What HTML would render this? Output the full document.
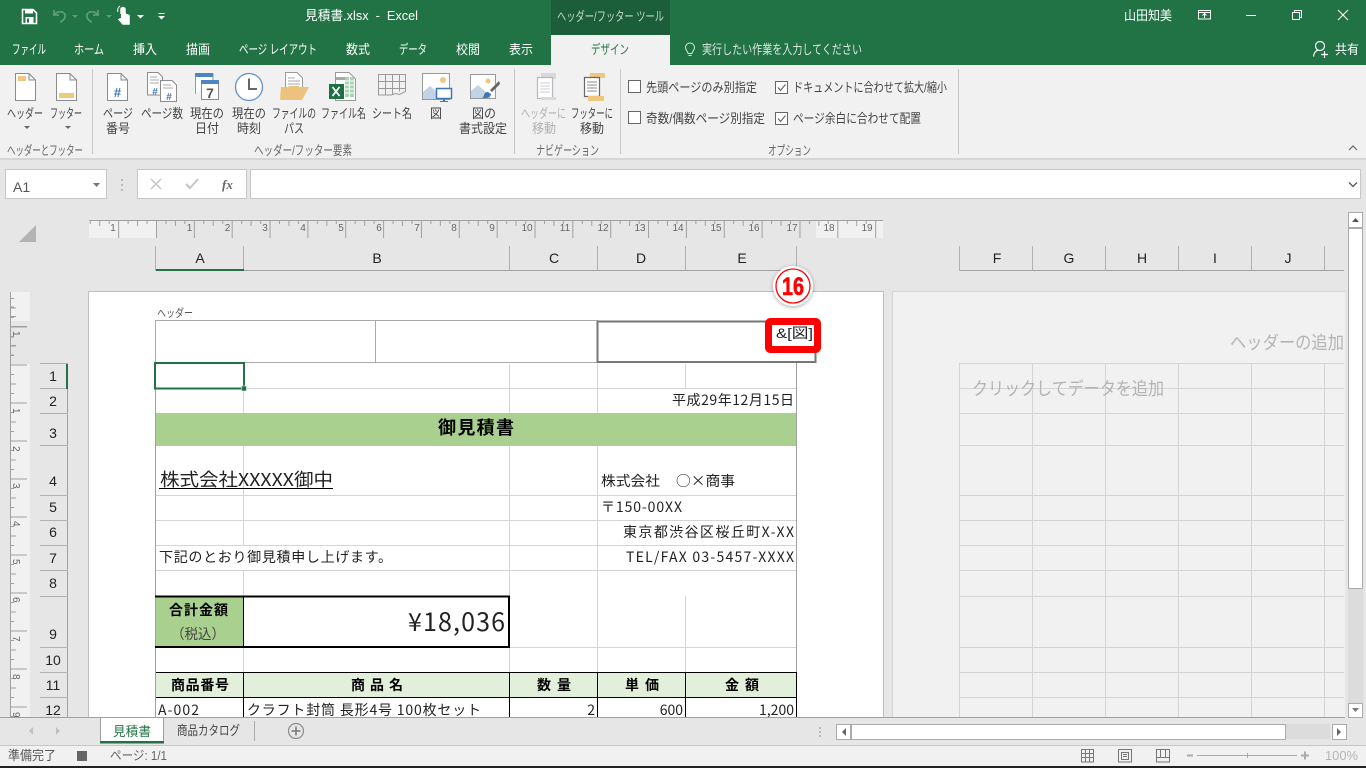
<!DOCTYPE html>
<html lang="ja"><head><meta charset="utf-8"><title>見積書.xlsx - Excel</title>
<style>
html,body{margin:0;padding:0;width:1366px;height:768px;overflow:hidden;background:#e6e6e6}
svg{display:block;position:absolute;left:0;top:0}
text{font-family:"Liberation Sans","Noto Sans CJK JP",sans-serif;font-size:13px;fill:#444;white-space:pre}
.t{fill:#fff}
.c{font-size:14px;fill:#222;font-family:"Noto Sans CJK JP","Liberation Sans",sans-serif}
.b{font-weight:700;fill:#000}
.r{font-size:10px;fill:#666}
.h{font-size:14px;fill:#222;text-anchor:middle}
.g{font-size:18px;fill:#b4b4b4}
.p{fill:#fff;stroke:#8c8c8c;stroke-width:1}
.l{stroke:#d4d4d4;stroke-width:1;fill:none}
.k{stroke:#a0a0a0;stroke-width:1;fill:none}
</style></head><body>
<svg width="1366" height="768" viewBox="0 0 1366 768" xmlns="http://www.w3.org/2000/svg">
<defs>
<pattern id="hr" patternUnits="userSpaceOnUse" x="156" y="220" width="37.85" height="18"><path d="M.5 0V18M9.96 0V4M19.4 0V6M28.9 0V4" stroke="#a0a0a0" fill="none"/></pattern>
<pattern id="vr" patternUnits="userSpaceOnUse" x="10" y="364.5" width="20" height="38"><path d="M0 .5H17M0 10H4M0 19.5H6M0 29H4" stroke="#a0a0a0" fill="none"/></pattern>
<filter id="sh" x="-30%" y="-30%" width="160%" height="160%"><feDropShadow dx="0" dy="1" stdDeviation="2" flood-color="#000" flood-opacity=".35"/></filter>
</defs>

<!-- title bar & tabs -->
<rect width="1366" height="65" fill="#217346"/>
<rect x="551" y="0" width="119" height="35" fill="#1b5e39"/>
<rect x="551" y="35" width="119" height="30" fill="#f1f1f1"/>
<!-- QAT -->
<path d="M22.5 9.5H33L36.5 13V23.5H22.5Z" fill="none" stroke="#fff" stroke-width="1.6"/><rect x="25" y="9" width="8" height="4.5" fill="#fff"/><rect x="25.5" y="17" width="8" height="6" fill="#fff"/><rect x="27" y="18.5" width="2" height="4" fill="#217346"/>
<path d="M54 10V15H59M54 15C58 10 66 11 65 17C64.500 20 62 21 60 22" fill="none" stroke="#5b9b77" stroke-width="1.800"/>
<path d="M72 15h6l-3 3z" fill="#5b9b77"/>
<path d="M98 10V15H93M98 15C94 10 86 11 87 17C87.500 20 90 21 92 22" fill="none" stroke="#5b9b77" stroke-width="1.800"/>
<path d="M106 15h6l-3 3z" fill="#5b9b77"/>
<path d="M121 14V9.500a2 2 0 0 1 4 0V14l4 1.500V24h-6l-4-4.500 2-1" fill="#fff" stroke="#fff" stroke-width="1.500"/><path d="M118 12a5 5 0 0 1 2-6" stroke="#fff" fill="none"/>
<path d="M137 15h7l-3.500 3.500z" fill="#fff"/>
<path d="M158.500 13.500h6" stroke="#fff"/><path d="M158 16h7l-3.500 3.500z" fill="#fff"/>
<text class="t" x="305" y="20" textLength="113" lengthAdjust="spacingAndGlyphs">見積書.xlsx  -  Excel</text>
<text x="557" y="21" textLength="107" lengthAdjust="spacingAndGlyphs" style="fill:#c4d8cc">ヘッダー/フッター ツール</text>
<text class="t" x="1124" y="20" textLength="48" lengthAdjust="spacingAndGlyphs">山田知美</text>
<!-- window controls -->
<path d="M1198.500 10.500h12v8.500h-12zM1198.500 12.500h12M1204.500 18v-4M1202.500 15.500l2-2 2 2" fill="none" stroke="#fff"/>
<path d="M1246 15.500h10" stroke="#fff"/>
<path d="M1292.500 12.500h7v7h-7zM1294.500 12.500v-2h7v7h-2" fill="none" stroke="#fff"/>
<path d="M1338 10l10 10M1348 10l-10 10" stroke="#fff" stroke-width="1.100"/>
<!-- tabs -->
<text class="t" x="12" y="54" textLength="34" lengthAdjust="spacingAndGlyphs">ファイル</text>
<text class="t" x="74" y="54" textLength="30" lengthAdjust="spacingAndGlyphs">ホーム</text>
<text class="t" x="133" y="54" textLength="24" lengthAdjust="spacingAndGlyphs">挿入</text>
<text class="t" x="186" y="54" textLength="24" lengthAdjust="spacingAndGlyphs">描画</text>
<text class="t" x="239" y="54" textLength="78" lengthAdjust="spacingAndGlyphs">ページ レイアウト</text>
<text class="t" x="346" y="54" textLength="24" lengthAdjust="spacingAndGlyphs">数式</text>
<text class="t" x="399" y="54" textLength="28" lengthAdjust="spacingAndGlyphs">データ</text>
<text class="t" x="456" y="54" textLength="24" lengthAdjust="spacingAndGlyphs">校閲</text>
<text class="t" x="509" y="54" textLength="24" lengthAdjust="spacingAndGlyphs">表示</text>
<text x="591" y="54" textLength="38" lengthAdjust="spacingAndGlyphs" style="fill:#217346">デザイン</text>
<path d="M688 53.500c0-2-2.500-3-2.500-6a4.500 4.500 0 0 1 9 0c0 3-2.500 4-2.500 6zM688.500 55.500h3" fill="none" stroke="#dbe8e0"/>
<text x="702" y="54" textLength="160" lengthAdjust="spacingAndGlyphs" style="fill:#dbe8e0">実行したい作業を入力してください</text>
<circle cx="1320" cy="46" r="4.500" fill="none" stroke="#fff" stroke-width="1.200"/><path d="M1313.500 56.500c.5-4 2.500-6 5-6.500M1321 54.500h7M1324.500 51v7" fill="none" stroke="#fff" stroke-width="1.200"/>
<text class="t" x="1335" y="54" textLength="24" lengthAdjust="spacingAndGlyphs">共有</text>

<!-- ribbon -->
<rect y="65" width="1366" height="93" fill="#f1f1f1"/>
<rect y="158" width="1366" height="2" fill="#d6d6d6"/>
<path d="M92.500 69v85M514.500 69v85M620.500 69v85M958.500 69v85" stroke="#c6c6c6"/>
<!-- header / footer icons -->
<path class="p" d="M15.500 73.500H29L35.500 80V100.500H15.500ZM29 73.500V80H35.500"/><rect x="18" y="76" width="8" height="5" fill="#efc77e"/>
<path class="p" d="M56.500 73.500H70L76.500 80V100.500H56.500ZM70 73.500V80H76.500"/><rect x="59" y="93" width="15" height="5" fill="#efc77e"/>
<path class="p" d="M107.500 73.500H121L127.500 80V100.500H107.500ZM121 73.500V80H127.500"/>
<text x="117.500" y="97" style="font-size:13px;font-weight:700;fill:#3f78b5;text-anchor:middle">#</text>
<path class="p" d="M147.500 72.500H158L162.500 77V95H147.500Z"/><path d="M150 77h7M150 80h9M150 83h9" stroke="#aaa"/>
<text x="155" y="95" style="font-size:10px;font-weight:700;fill:#3f78b5;text-anchor:middle">#</text>
<path class="p" d="M160.500 80.500H172L176.500 85V101.500H160.500Z"/><path d="M163 85h8M163 88h10" stroke="#aaa"/>
<text x="169" y="100" style="font-size:10px;font-weight:700;fill:#3f78b5;text-anchor:middle">#</text>
<path d="M195.500 94V73.500H213V80" fill="#fff" stroke="#999"/><rect x="195" y="73" width="18" height="4" fill="#4e86c4"/>
<rect x="201.500" y="80.500" width="17" height="19" fill="#fff" stroke="#8c8c8c"/><rect x="201" y="80" width="18" height="4" fill="#4e86c4"/>
<text x="210" y="98" style="font-size:14px;font-weight:700;fill:#555;text-anchor:middle">7</text>
<circle cx="249" cy="87" r="13.500" fill="#fff" stroke="#5f92cc" stroke-width="1.300"/><path d="M249 78.500V89H257" fill="none" stroke="#666" stroke-width="2"/>
<path d="M285.500 92V72.500H297L302.500 78V92" fill="#fff" stroke="#999"/><path d="M288 78h7M288 81h12M288 84h12" stroke="#aaa"/>
<path d="M281 87h7l1-1h10l0 1h10l-7 13H280Z" fill="#edc27c"/>
<path d="M335.500 72.500H349L355.500 79V100.500H335.500Z" fill="#fff" stroke="#999"/>
<path d="M336 77h9v3h-9z" fill="#aaa"/><rect x="345" y="77" width="9" height="20" fill="#a8d5b4"/><path d="M345 81h9M345 85h9M345 89h9M345 93h9M349.500 77v20" stroke="#fff"/>
<rect x="329" y="84" width="15" height="15" fill="#1e7145"/>
<path d="M332.500 87l7 9M339.500 87l-7 9" stroke="#fff" stroke-width="1.800"/>
<path d="M378.500 74.500h27v17l-6 3-4-1-4 1.500h-13zM378.500 81.500h27M378.500 88.500h27M385.500 74.500v20M392.500 74.500v20M399.500 74.500v17" fill="none" stroke="#999"/>
<rect x="422.500" y="73.500" width="27" height="26" fill="#fff" stroke="#999"/><circle cx="443" cy="80" r="3" fill="#efc77e"/><path d="M423 99V92l7-6 8 7 3-2 3 8z" fill="#c2d3e8"/>
<rect x="436.500" y="88.500" width="15" height="10" fill="#fff" stroke="#3f78b5" stroke-width="1.500"/><rect x="443" y="99" width="2" height="2" fill="#3f78b5"/><path d="M440 101.500h8" stroke="#3f78b5"/>
<rect x="470.500" y="74.500" width="25" height="24" fill="#fff" stroke="#999"/><circle cx="488" cy="81" r="2.500" fill="#efc77e"/><path d="M471 98V91l7-6 8 7 5 6z" fill="#c2d3e8"/>
<path d="M499 81l-9 9 2 2 8-8z" fill="#666"/><path d="M488 92c-3 0-4 2-4 4l-2 2h4c3 0 5-2 5-4z" fill="#3f78b5"/>
<!-- nav icons -->
<rect x="541" y="73" width="15" height="6" fill="#dad8dc"/><path d="M537.500 77.500h15v21h-15z" fill="#fff" stroke="#b8b6ba" stroke-width="1.200"/><path d="M540 83h10M540 86h10M540 89h10M540 92h10" stroke="#cfcdd1"/><rect x="541" y="97" width="15" height="3" fill="#dad8dc"/>
<rect x="590" y="73" width="15" height="5" fill="#efc77e"/><path d="M584.500 77.500h15v19h-15z" fill="#fff" stroke="#666" stroke-width="1.200"/><path d="M587 82h10M587 85h10M587 88h10M587 91h10" stroke="#888"/><rect x="588" y="96" width="16" height="5" fill="#efc77e"/>
<!-- ribbon labels -->
<text x="7" y="118" textLength="36" lengthAdjust="spacingAndGlyphs">ヘッダー</text>
<text x="50" y="118" textLength="32" lengthAdjust="spacingAndGlyphs">フッター</text>
<path d="M24 126h6l-3 3zM65 126h6l-3 3z" fill="#666"/>
<text x="103" y="118" textLength="30" lengthAdjust="spacingAndGlyphs">ページ</text><text x="106" y="133" textLength="24" lengthAdjust="spacingAndGlyphs">番号</text>
<text x="141" y="118" textLength="42" lengthAdjust="spacingAndGlyphs">ページ数</text>
<text x="190" y="118" textLength="34" lengthAdjust="spacingAndGlyphs">現在の</text><text x="195" y="133" textLength="24" lengthAdjust="spacingAndGlyphs">日付</text>
<text x="232" y="118" textLength="34" lengthAdjust="spacingAndGlyphs">現在の</text><text x="237" y="133" textLength="24" lengthAdjust="spacingAndGlyphs">時刻</text>
<text x="272" y="118" textLength="44" lengthAdjust="spacingAndGlyphs">ファイルの</text><text x="284" y="133" textLength="20" lengthAdjust="spacingAndGlyphs">パス</text>
<text x="321" y="118" textLength="45" lengthAdjust="spacingAndGlyphs">ファイル名</text>
<text x="372" y="118" textLength="40" lengthAdjust="spacingAndGlyphs">シート名</text>
<text x="430" y="118" textLength="12" lengthAdjust="spacingAndGlyphs">図</text>
<text x="472" y="118" textLength="24" lengthAdjust="spacingAndGlyphs">図の</text><text x="459" y="133" textLength="48" lengthAdjust="spacingAndGlyphs">書式設定</text>
<text x="521" y="118" textLength="45" lengthAdjust="spacingAndGlyphs" style="fill:#b1b1b1">ヘッダーに</text><text x="532" y="133" textLength="24" lengthAdjust="spacingAndGlyphs" style="fill:#b1b1b1">移動</text>
<text x="571" y="118" textLength="42" lengthAdjust="spacingAndGlyphs">フッターに</text><text x="580" y="133" textLength="24" lengthAdjust="spacingAndGlyphs">移動</text>
<text x="7" y="155" textLength="76" lengthAdjust="spacingAndGlyphs" style="fill:#666">ヘッダーとフッター</text>
<text x="254" y="155" textLength="98" lengthAdjust="spacingAndGlyphs" style="fill:#666">ヘッダー/フッター要素</text>
<text x="536" y="155" textLength="63" lengthAdjust="spacingAndGlyphs" style="fill:#666">ナビゲーション</text>
<text x="768" y="155" textLength="43" lengthAdjust="spacingAndGlyphs" style="fill:#666">オプション</text>
<!-- checkboxes -->
<rect x="628.500" y="80.500" width="12" height="12" fill="#fff" stroke="#666"/>
<rect x="628.500" y="111.500" width="12" height="12" fill="#fff" stroke="#666"/>
<rect x="775.500" y="81.500" width="12" height="12" fill="#fff" stroke="#666"/><path d="M778 87.500l2.500 3 5-6" fill="none" stroke="#666" stroke-width="1.200"/>
<rect x="775.500" y="112.500" width="12" height="12" fill="#fff" stroke="#666"/><path d="M778 118.500l2.500 3 5-6" fill="none" stroke="#666" stroke-width="1.200"/>
<text x="646" y="92" textLength="111" lengthAdjust="spacingAndGlyphs">先頭ページのみ別指定</text>
<text x="646" y="123" textLength="119" lengthAdjust="spacingAndGlyphs">奇数/偶数ページ別指定</text>
<text x="793" y="92" textLength="154" lengthAdjust="spacingAndGlyphs">ドキュメントに合わせて拡大/縮小</text>
<text x="793" y="123" textLength="128" lengthAdjust="spacingAndGlyphs">ページ余白に合わせて配置</text>
<path d="M1349 150l4-4 4 4" fill="none" stroke="#666" stroke-width="1.200"/>

<!-- formula bar -->
<rect x="5.500" y="169.500" width="101" height="29" fill="#fff" stroke="#c6c6c6"/>
<text x="13" y="192" style="font-size:14px;fill:#555">A1</text>
<path d="M93 183h7l-3.500 4z" fill="#777"/>
<path d="M122 179v2M122 184v2M122 189v2" stroke="#aaa" stroke-width="1.500"/>
<rect x="137.500" y="169.500" width="109" height="29" fill="#fff" stroke="#c6c6c6"/>
<path d="M151 179l10 10M161 179l-10 10" stroke="#c6c6c6" stroke-width="1.500"/>
<path d="M186 184l4 4 8-9" fill="none" stroke="#c6c6c6" stroke-width="2"/>
<text x="222" y="189" style="font-family:'Liberation Serif',serif;font-style:italic;font-weight:700;font-size:13px;fill:#666">fx</text>
<rect x="250.500" y="169.500" width="1110" height="29" fill="#fff" stroke="#c6c6c6"/>
<path d="M1349 182.500l4 4 4-4" fill="none" stroke="#555" stroke-width="1.300"/>

<!-- corner -->
<path d="M19 242L36 225V242Z" fill="#b4b4b4"/>

<!-- horizontal ruler -->
<rect x="89" y="220" width="67" height="18" fill="#f1f1f1"/>
<rect x="816" y="220" width="67" height="18" fill="#f1f1f1"/>
<rect x="89" y="220" width="794" height="18" fill="url(#hr)"/>
<path d="M89 220.500H883" stroke="#a0a0a0"/>
<g text-anchor="middle">
<text class="r" x="113" y="231">1</text><text class="r" x="189.500" y="231">1</text><text class="r" x="227.500" y="231">2</text><text class="r" x="265" y="231">3</text><text class="r" x="303" y="231">4</text><text class="r" x="341" y="231">5</text><text class="r" x="379" y="231">6</text><text class="r" x="417" y="231">7</text><text class="r" x="454" y="231">8</text><text class="r" x="492" y="231">9</text><text class="r" x="527" y="231">10</text><text class="r" x="565" y="231">11</text><text class="r" x="603" y="231">12</text><text class="r" x="640" y="231">13</text><text class="r" x="678" y="231">14</text><text class="r" x="716" y="231">15</text><text class="r" x="754" y="231">16</text><text class="r" x="792" y="231">17</text><text class="r" x="829" y="231">18</text><text class="r" x="867" y="231">19</text>
</g>

<!-- column headers -->
<path d="M156 270.500H797M960 270.500H1344" stroke="#a0a0a0"/>
<path d="M155.500 246v25M243.500 246v25M509.500 246v25M597.500 246v25M685.500 246v25M796.500 246v25M959.500 246v25M1032.500 246v25M1105.500 246v25M1178.500 246v25M1251.500 246v25M1324.500 246v25" stroke="#b0b0b0"/>
<rect x="156" y="269" width="88" height="2" fill="#217346"/>
<g>
<text class="h" x="200" y="263">A</text><text class="h" x="377" y="263">B</text><text class="h" x="554" y="263">C</text><text class="h" x="641" y="263">D</text><text class="h" x="742" y="263">E</text>
<text class="h" x="997" y="263">F</text><text class="h" x="1069" y="263">G</text><text class="h" x="1142" y="263">H</text><text class="h" x="1215" y="263">I</text><text class="h" x="1288" y="263">J</text>
</g>

<!-- vertical ruler -->
<rect x="11" y="292" width="19" height="29" fill="#f1f1f1"/>
<rect x="11" y="364" width="19" height="353" fill="#f1f1f1"/>
<rect x="10" y="292" width="20" height="425" fill="url(#vr)"/>
<path d="M10.500 292V717" stroke="#a0a0a0"/>
<path d="M10 326.500H27M10 337H14M10 345.500H16M10 355H14M10 307H14M10 316.500H16" stroke="#a0a0a0"/>
<g>
<text class="r" transform="translate(13,331) rotate(90)">1</text>
<text class="r" transform="translate(13,408) rotate(90)">1</text>
<text class="r" transform="translate(13,446) rotate(90)">2</text>
<text class="r" transform="translate(13,483) rotate(90)">3</text>
<text class="r" transform="translate(13,521) rotate(90)">4</text>
<text class="r" transform="translate(13,559) rotate(90)">5</text>
<text class="r" transform="translate(13,597) rotate(90)">6</text>
<text class="r" transform="translate(13,636) rotate(90)">7</text>
<text class="r" transform="translate(13,674) rotate(90)">8</text>
<text class="r" transform="translate(13,712) rotate(90)">9</text>
</g>

<!-- row headers -->
<path d="M67.500 364V717" stroke="#a0a0a0"/>
<path d="M40 363.500H68M40 388.500H68M40 413.500H68M40 445.500H68M40 495.500H68M40 520.500H68M40 545.500H68M40 570.500H68M40 596.500H68M40 647.500H68M40 672.500H68M40 697.500H68" stroke="#b0b0b0"/>
<rect x="66" y="364" width="2" height="25" fill="#217346"/>
<g>
<text class="h" x="53" y="381">1</text><text class="h" x="53" y="406">2</text><text class="h" x="53" y="438">3</text><text class="h" x="53" y="486">4</text><text class="h" x="53" y="512">5</text><text class="h" x="53" y="537">6</text><text class="h" x="53" y="563">7</text><text class="h" x="53" y="588">8</text><text class="h" x="53" y="639">9</text><text class="h" x="53" y="665">10</text><text class="h" x="53" y="690">11</text><text class="h" x="53" y="715">12</text>
</g>

<!-- page 1 -->
<rect x="88.500" y="291.500" width="795" height="430" fill="#fff" stroke="#bfbfbf"/>
<!-- page 2 -->
<rect x="892.500" y="291.500" width="460" height="430" fill="#f1f1f1" stroke="#d4d4d4"/>
<rect x="1345" y="212" width="21" height="506" fill="#e6e6e6"/>
<path d="M959.500 363V717M1032.500 363V717M1105.500 363V717M1178.500 363V717M1251.500 363V717M1324.500 363V717" class="l"/>
<path d="M960 363.500H1344M960 388.500H1344M960 413.500H1344M960 445.500H1344M960 495.500H1344M960 520.500H1344M960 545.500H1344M960 570.500H1344M960 596.500H1344M960 647.500H1344M960 672.500H1344M960 697.500H1344" class="l"/>
<text class="g" x="1230" y="349" textLength="114" lengthAdjust="spacingAndGlyphs">ヘッダーの追加</text>
<text class="g" x="972" y="395" textLength="192" lengthAdjust="spacingAndGlyphs">クリックしてデータを追加</text>

<!-- sheet gridlines -->
<path class="l" d="M156 388.500H797M156 413.500H797M156 445.500H797M156 495.500H797M156 520.500H797M156 545.500H797M156 570.500H797M510 647.500H797M156 647.500H510M156 672.500H797"/>
<path class="l" d="M243.500 364V413M243.500 446V545M243.500 570V596M243.500 647V672M509.500 364V413M509.500 446V596M509.500 647V672M597.500 364V413M597.500 446V672M685.500 364V389M685.500 596V672"/>
<rect x="156" y="413" width="641" height="33" fill="#a9d08e"/>
<path class="k" d="M155.500 363V717M796.500 363V717"/>

<!-- total box -->
<rect x="156" y="597" width="88" height="50" fill="#a9d08e"/>
<path d="M155 596.500H510M155 647H510M509 596V648" stroke="#000" stroke-width="2" fill="none"/>
<path d="M243.500 597V647" stroke="#000"/>
<!-- table -->
<rect x="156" y="672" width="641" height="25" fill="#e2efda"/>
<path d="M156 672.500H797M156 697.500H797M243.500 672V717M509.500 672V717M597.500 672V717M685.500 672V717M796.500 672V717" stroke="#000" fill="none"/>

<!-- header section boxes -->
<text x="157" y="317" textLength="36" lengthAdjust="spacingAndGlyphs" style="font-size:11.500px;fill:#555">ヘッダー</text>
<path d="M155.500 363V320.500H598M375.500 321V362M156 362.500H598" fill="none" stroke="#aaa"/>
<rect x="597.500" y="321.500" width="218" height="40.500" fill="#fff" stroke="#777" stroke-width="2"/>

<!-- selection -->
<rect x="155" y="363" width="89" height="25.500" fill="none" stroke="#217346" stroke-width="2"/>
<rect x="241.500" y="386" width="5" height="5" fill="#217346" stroke="#fff" stroke-width=".5"/>

<!-- sheet text -->
<text class="c" x="672" y="405" textLength="122">平成29年12月15日</text>
<text class="c b" x="438" y="434" style="font-size:18px" textLength="76">御見積書</text>
<text class="c" x="160" y="486" style="font-size:18px" textLength="173" lengthAdjust="spacingAndGlyphs">株式会社XXXXX御中</text>
<path d="M159 488.500H333" stroke="#000"/>
<text class="c" x="601" y="486" style="font-size:14px" textLength="59" lengthAdjust="spacingAndGlyphs">株式会社</text>
<text class="c" x="676" y="486" style="font-size:14px" textLength="59" lengthAdjust="spacingAndGlyphs">○×商事</text>
<text class="c" x="601" y="512" textLength="81">〒150-00XX</text>
<text class="c" x="623" y="537" textLength="171">東京都渋谷区桜丘町X-XX</text>
<text class="c" x="626" y="562" textLength="168">TEL/FAX 03-5457-XXXX</text>
<text class="c" x="159" y="562" textLength="233">下記のとおり御見積申し上げます。</text>
<text class="c b" x="169" y="615" style="font-size:14px" textLength="59">合計金額</text>
<text class="c" x="171" y="639" style="font-size:14px;fill:#444" textLength="54" lengthAdjust="spacingAndGlyphs">（税込）</text>
<text class="c" x="408" y="631" style="font-size:25px" textLength="97">¥18,036</text>
<text class="c b" x="171" y="690" textLength="58">商品番号</text>
<text class="c b" x="351" y="690" textLength="52">商 品 名</text>
<text class="c b" x="537" y="690" textLength="34">数 量</text>
<text class="c b" x="625" y="690" textLength="34">単 価</text>
<text class="c b" x="725" y="690" textLength="34">金 額</text>
<text class="c" x="158" y="715" textLength="41">A-002</text>
<text class="c" x="247" y="715" textLength="234">クラフト封筒 長形4号 100枚セット</text>
<text class="c" x="595" y="715" text-anchor="end">2</text>
<text class="c" x="683" y="715" text-anchor="end">600</text>
<text class="c" x="794" y="715" text-anchor="end">1,200</text>

<!-- annotation -->
<rect x="768.500" y="321.500" width="49" height="28" rx="2" fill="#ffffff" stroke="#f00" stroke-width="7"/>
<text x="776" y="338" style="font-size:14px;fill:#222" textLength="37" lengthAdjust="spacingAndGlyphs">&amp;[図]</text>
<circle cx="793" cy="286" r="20" fill="#fff" filter="url(#sh)"/>
<circle cx="793" cy="286" r="17" fill="#fff" stroke="#f00" stroke-width="1.300"/>
<text x="782" y="295" style="font-size:25px;font-weight:700;fill:#f00;stroke:#f00;stroke-width:.6" textLength="22" lengthAdjust="spacingAndGlyphs">16</text>

<!-- v scrollbar -->
<rect x="1348" y="212" width="15" height="505" fill="#dcdcdc"/>
<rect x="1348.500" y="212.500" width="14" height="15" fill="#fff" stroke="#ababab"/><path d="M1352 222l3.500-4 3.500 4z" fill="#555"/>
<rect x="1348.500" y="228.500" width="14" height="360" fill="#fff" stroke="#ababab"/>
<rect x="1348.500" y="703.500" width="14" height="14" fill="#fff" stroke="#ababab"/><path d="M1352 708l3.500 4 3.500-4z" fill="#777"/>

<!-- sheet tabs bar -->
<rect y="718" width="1366" height="27" fill="#e6e6e6"/>
<path d="M0 717.500H100M164 717.500H1345" stroke="#a0a0a0"/>
<path d="M33 727v8l-4-4zM56 727v8l4-4z" fill="#c0c0c0"/>
<path d="M100.500 718V742M163.500 718V742M100 717.500H164" stroke="#a0a0a0"/>
<rect x="101" y="718" width="62" height="24" fill="#fff"/>
<rect x="100" y="741" width="64" height="2.500" fill="#217346"/>
<text x="113" y="736" textLength="38" lengthAdjust="spacingAndGlyphs" style="fill:#217346">見積書</text>
<text x="177" y="735" textLength="63" lengthAdjust="spacingAndGlyphs">商品カタログ</text>
<path d="M254.500 721V741" stroke="#aaa"/>
<circle cx="296" cy="731" r="7.500" fill="none" stroke="#8c8c8c" stroke-width="1.200"/><path d="M291.500 731h9M296 726.500v9" stroke="#777" stroke-width="1.500"/>
<path d="M820 727v2M820 731v2M820 735v2" stroke="#aaa" stroke-width="1.500"/>
<rect x="836" y="724" width="494" height="15" fill="#dcdcdc"/>
<rect x="836.500" y="724.500" width="14" height="15" fill="#fff" stroke="#ababab"/><path d="M846 728v8l-4-4z" fill="#666"/>
<rect x="851.500" y="724.500" width="434" height="15" fill="#fff" stroke="#ababab"/>
<rect x="1332.500" y="724.500" width="14" height="15" fill="#fff" stroke="#ababab"/><path d="M1337 728v8l4-4z" fill="#666"/>

<!-- status bar -->
<rect y="745" width="1366" height="21" fill="#f1f1f1"/>
<path d="M0 745.500H1366" stroke="#c6c6c6"/>
<rect y="766" width="1366" height="2" fill="#222"/>
<text x="8" y="760" textLength="48" lengthAdjust="spacingAndGlyphs" style="fill:#555">準備完了</text>
<rect x="77" y="751" width="10" height="10" fill="#666"/>
<text x="110" y="760" textLength="57" lengthAdjust="spacingAndGlyphs" style="fill:#666">ページ: 1/1</text>
<path d="M1081.500 749.500h12v12.500h-12zM1081.500 753.500h12M1081.500 757.500h12M1085.500 749.500v12.500M1089.500 749.500v12.500" fill="none" stroke="#777"/>
<path d="M1118.500 749.500h13v12.500h-13zM1121.500 752.500h7v7h-7zM1123 754.500h4M1123 756.500h4" fill="none" stroke="#777"/>
<path d="M1156.500 749.500h13v12.500h-13zM1156.500 757.500h13M1160.500 749.500v8M1165.500 749.500v8" fill="none" stroke="#777"/>
<path d="M1187 755.500h6" stroke="#aaa" stroke-width="2"/>
<path d="M1197 755.500h100M1247.500 753v5" stroke="#aaa"/>
<path d="M1301 755.500h8M1305 751.500v8" stroke="#aaa" stroke-width="2"/>
<text x="1325" y="760" textLength="33" lengthAdjust="spacingAndGlyphs" style="fill:#b4b4b4">100%</text>
</svg>
</body></html>
